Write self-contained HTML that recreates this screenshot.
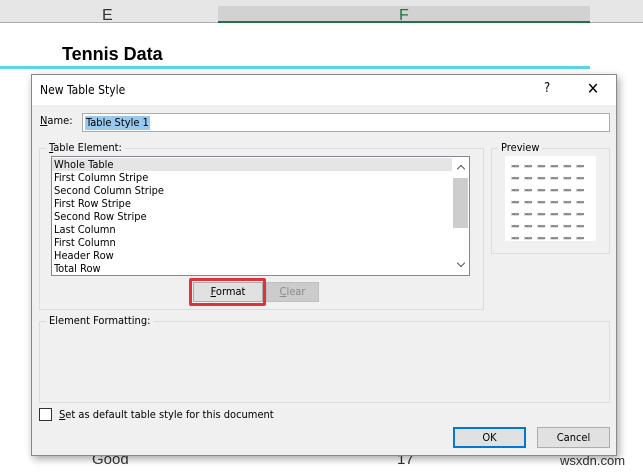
<!DOCTYPE html>
<html><head><style>
*{margin:0;padding:0;box-sizing:border-box}
body{width:643px;height:472px;background:#fff;position:relative;overflow:hidden;font-family:"Liberation Sans",sans-serif;font-size:12px;color:#000}
.a{position:absolute}
.t{font-family:"DejaVu Sans Condensed","Liberation Sans",sans-serif;font-size:11px}
.gb{position:absolute;border:1px solid #dcdcdc}
.lbl{position:absolute;background:#f0f0f0;padding:0 3px;top:-8px;left:6px}
.row{height:13px;line-height:13px;padding-left:2px}
.pv{font-size:6px;line-height:12px;overflow:hidden}
.pv span{display:inline-block;width:13px;font-size:6px;line-height:12px;font-weight:bold;color:#444;letter-spacing:-1px;vertical-align:top}
.chev{position:absolute;width:6px;height:6px;border-left:1.5px solid #555;border-top:1.5px solid #555}
</style></head><body>
<div class="a" style="left:0;top:0;width:643px;height:23px;background:#e6e6e6;border-bottom:1px solid #ababab"></div>
<div class="a" style="left:218px;top:6px;width:372px;height:17px;background:#d2d2d2;border-bottom:2px solid #217346"></div>
<div class="a" style="left:102px;top:7px;font-size:16px;color:#333">E</div>
<div class="a" style="left:399px;top:7px;font-size:16px;color:#217346">F</div>
<div class="a" style="left:62px;top:44px;font-size:18px;font-weight:bold">Tennis Data</div>
<div class="a" style="left:0;top:66px;width:590px;height:3px;background:#5ad7e0"></div>
<div class="a" style="left:92px;top:451px;font-size:15px;color:#333">Good</div>
<div class="a" style="left:397px;top:451px;font-size:15px;color:#333">17</div>
<div class="a" style="left:560px;top:453px;font-size:13px;color:#333">wsxdn.com</div>

<div class="a t" style="left:31px;top:74px;width:586px;height:382px;background:#f0f0f0;border:1px solid #888;box-shadow:2px 3px 8px rgba(0,0,0,.35)">
 <div class="a" style="left:0;top:0;width:584px;height:30px;background:#fff"></div>
 <div class="a" style="left:8px;top:8px;font-size:12px">New Table Style</div>
 <div class="a" style="left:512px;top:6px;font-size:13px">?</div>
 <div class="a" style="left:555px;top:4px;font-size:16px">✕</div>
 <div class="a" style="left:8px;top:39px"><u>N</u>ame:</div>
 <div class="a" style="left:50px;top:38px;width:528px;height:19px;background:#fff;border:1px solid #aaa"><span style="background:#99c9ef;margin:2px;display:inline-block;padding:0 1px;line-height:14px">Table Style 1</span></div>
 <div class="gb" style="left:7px;top:73px;width:445px;height:162px"><span class="lbl"><u>T</u>able Element:</span></div>
 <div class="a" style="left:19px;top:81px;width:419px;height:120px;background:#fff;border:1px solid #828790;padding-top:1px">
  <div class="row" style="background:#e5e5e5;width:400px">Whole Table</div>
  <div class="row">First Column Stripe</div><div class="row">Second Column Stripe</div><div class="row">First Row Stripe</div><div class="row">Second Row Stripe</div><div class="row">Last Column</div><div class="row">First Column</div><div class="row">Header Row</div><div class="row">Total Row</div>
  <div class="a" style="left:401px;top:21px;width:15px;height:50px;background:#cdcdcd"></div>
  <div class="chev" style="left:406px;top:9px;transform:rotate(45deg)"></div>
  <div class="chev" style="left:406px;top:103px;transform:rotate(225deg)"></div>
 </div>
 <div class="a" style="left:157px;top:203px;width:77px;height:28px;border:3px solid #e0323b;border-radius:2px"></div>
 <div class="a" style="left:161px;top:207px;width:70px;height:20px;background:#e1e1e1;border:1px solid #adadad;text-align:center;line-height:18px"><u>F</u>ormat</div>
 <div class="a" style="left:234px;top:207px;width:53px;height:20px;background:#ccc;border:1px solid #bfbfbf;text-align:center;line-height:18px;color:#8a8a8a"><u>C</u>lear</div>
 <div class="gb" style="left:459px;top:73px;width:119px;height:106px"><span class="lbl">Preview</span></div>
 <div class="a pv" style="left:473px;top:81px;width:91px;height:85px;background:#fff;padding:5px 0 0 6px">
  <span>»»»</span><span>»»»</span><span>»»»</span><span>»»»</span><span>»»»</span><span>»»»</span><br>
  <span>»»»</span><span>»»»</span><span>»»»</span><span>»»»</span><span>»»»</span><span>»»»</span><br>
  <span>»»»</span><span>»»»</span><span>»»»</span><span>»»»</span><span>»»»</span><span>»»»</span><br>
  <span>»»»</span><span>»»»</span><span>»»»</span><span>»»»</span><span>»»»</span><span>»»»</span><br>
  <span>»»»</span><span>»»»</span><span>»»»</span><span>»»»</span><span>»»»</span><span>»»»</span><br>
  <span>»»»</span><span>»»»</span><span>»»»</span><span>»»»</span><span>»»»</span><span>»»»</span><br>
  <span>»»»</span><span>»»»</span><span>»»»</span><span>»»»</span><span>»»»</span><span>»»»</span>
 </div>
 <div class="gb" style="left:7px;top:246px;width:571px;height:82px"><span class="lbl">Element Formatting:</span></div>
 <div class="a" style="left:7px;top:333px;width:13px;height:13px;background:#fff;border:1px solid #333"></div>
 <div class="a" style="left:27px;top:333px"><u>S</u>et as default table style for this document</div>
 <div class="a" style="left:421px;top:352px;width:73px;height:21px;background:#e1e1e1;border:2px solid #0078d7;text-align:center;line-height:17px">OK</div>
 <div class="a" style="left:505px;top:352px;width:73px;height:21px;background:#e1e1e1;border:1px solid #adadad;text-align:center;line-height:19px">Cancel</div>
</div>
</body></html>
